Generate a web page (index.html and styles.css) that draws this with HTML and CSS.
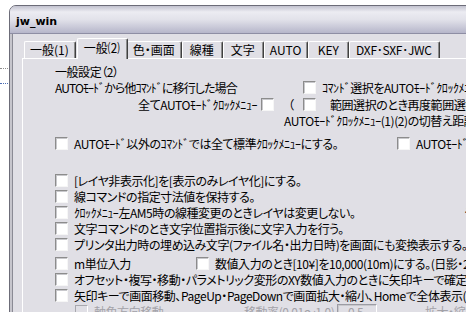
FILE: index.html
```html
<!DOCTYPE html>
<html lang="ja">
<head>
  <meta charset="UTF-8" />
  <title>jw_win</title>
  <link rel="stylesheet" href="styles.css">
</head>
<body>
  <div class="desk">
    <i class="dots"></i>
    <i class="dots blue"></i>
  </div>

  <div class="window">
    <div class="titlebar"><span class="title">jw_win</span></div>

    <div class="frame">
      <div class="tabs">
        <div class="tab">一般(1)</div>
        <div class="tab active">一般⑵</div>
        <div class="tab">色・画面</div>
        <div class="tab">線種</div>
        <div class="tab">文字</div>
        <div class="tab">AUTO</div>
        <div class="tab">KEY</div>
        <div class="tab wide">DXF･SXF･JWC</div>
      </div>

      <div class="panel">
        <div class="row heading">一般設定（2）</div>

        <div class="row">
          <span class="lead-r1">AUTOﾓｰﾄﾞから他ｺﾏﾝﾄﾞに移行した場合</span>
          <span class="opt"><i class="cb"></i>ｺﾏﾝﾄﾞ選択をAUTOﾓｰﾄﾞｸﾛｯｸﾒﾆｭｰにする</span>
        </div>

        <div class="row r2">
          <span class="lead-r2">全てAUTOﾓｰﾄﾞｸﾛｯｸﾒﾆｭｰ</span>
          <i class="cb"></i>
          <span class="paren">（</span>
          <span class="opt"><i class="cb"></i>範囲選択のとき再度範囲選択</span>
        </div>

        <div class="row r3">AUTOﾓｰﾄﾞｸﾛｯｸﾒﾆｭｰ(1)(2)の切替え距離</div>

        <div class="row r4">
          <span class="opt w-342"><i class="cb"></i>AUTOﾓｰﾄﾞ以外のｺﾏﾝﾄﾞでは全て標準ｸﾛｯｸﾒﾆｭｰにする。</span>
          <span class="opt"><i class="cb"></i>AUTOﾓｰﾄﾞｸﾛｯｸﾒﾆｭｰ</span>
        </div>

        <div class="group">
          <div class="row"><span class="opt"><i class="cb"></i>[レイヤ非表示化]を[表示のみレイヤ化]にする。</span></div>
          <div class="row"><span class="opt"><i class="cb"></i>線コマンドの指定寸法値を保持する。</span></div>
          <div class="row">
            <span class="opt w-410"><i class="cb"></i>ｸﾛｯｸﾒﾆｭｰ左AM5時の線種変更のときレイヤは変更しない。</span>
            <span>ｾ</span>
          </div>
          <div class="row"><span class="opt"><i class="cb"></i>文字コマンドのとき文字位置指示後に文字入力を行う。</span></div>
          <div class="row"><span class="opt"><i class="cb"></i>プリンタ出力時の埋め込み文字(ファイル名・出力日時)を画面にも変換表示する。</span></div>
        </div>

        <div class="group g2">
          <div class="row">
            <span class="opt w-141"><i class="cb"></i>m単位入力</span>
            <span class="opt"><i class="cb"></i>数値入力のとき[10¥]を10,000(10m)にする。(日影・2.5D)</span>
          </div>
          <div class="row"><span class="opt"><i class="cb"></i>オフセット・複写・移動・パラメトリック変形のXY数値入力のときに矢印キーで確定</span></div>
          <div class="row"><span class="opt"><i class="cb"></i>矢印キーで画面移動、PageUp・PageDownで画面拡大・縮小、Homeで全体表示(Ctrl)</span></div>
          <div class="row disabled">
            <span class="opt w-169"><i class="cb"></i>軸角方向移動</span>
            <span class="rate">移動率(0.01～1.0)</span>
            <span class="field">0.5</span>
            <span>拡大・縮小率</span>
          </div>
        </div>
      </div>
    </div>
  </div>
</body>
</html>
```

FILE: styles.css
```css
* {
  margin: 0;
  padding: 0;
  box-sizing: border-box;
}

body {
  display: flex;
  align-items: flex-start;
  width: 466px;
  height: 312px;
  overflow: hidden;
  background-color: #fff;
  font-family: "Noto Sans CJK JP", sans-serif;
  font-size: 12px;
  font-feature-settings: "palt";
  color: #000;
}

.desk {
  width: 9px;
  flex: none;
  padding-top: 68px;
}

.dots {
  display: block;
  width: 8px;
  margin-bottom: 14px;
  border-top: 1px dotted #8c8c8c;
}

.dots.blue {
  border-top-color: #4a6cb4;
}

.window {
  width: 540px;
  height: 330px;
  flex: none;
  margin-top: 5px;
  border: 1px solid #6c6c78;
  border-top-left-radius: 7px;
  overflow: hidden;
  background-color: #e0dfe5;
}

.titlebar {
  height: 28px;
  display: flex;
  align-items: center;
  padding: 3px 0 0 6px;
  background: linear-gradient(#c2c2cf 0, #ececf2 22%, #e2e2ea 50%, #b6b6ca 100%);
  border-bottom: 1px solid #8e8ea4;
}

.title {
  font-family: "DejaVu Sans", sans-serif;
  font-weight: bold;
  font-size: 11px;
}

.frame {
  height: 100%;
  padding-left: 10px;
  border-left: 2px solid #c6c5cc;
  box-shadow: inset 1px 0 #8a8a94;
}

.tabs {
  display: flex;
  align-items: flex-start;
  padding: 4px 0 0 2px;
  height: 24px;
}

.tab {
  min-width: 41px;
  height: 17px;
  margin-top: 3px;
  padding: 0 6px 0 5px;
  line-height: 16px;
  text-align: center;
  border-top: 1px solid #fff;
  border-left: 1px solid #fff;
  border-right: 1px solid #404040;
  box-shadow: inset -1px 0 #8c8c8c;
  border-radius: 2px 2px 0 0;
  white-space: nowrap;
}

.tab.active {
  position: relative;
  z-index: 1;
  height: 21px;
  margin: 0 -1px 0 1px;
  padding: 1px 7px 0 6px;
  background-color: #e0dfe5;
}

.tab.wide {
  width: 91px;
  padding: 0 2px 0 0;
  letter-spacing: -0.3px;
}

.panel {
  height: 260px;
  padding: 4px 0 0 32px;
  border-top: 1px solid #fff;
  border-left: 1px solid #fff;
  letter-spacing: -0.45px;
}

.row {
  display: flex;
  align-items: center;
  height: 16px;
  white-space: nowrap;
}

.opt {
  display: flex;
  align-items: center;
  flex: none;
}

.cb {
  width: 13px;
  height: 13px;
  flex: none;
  margin-right: 6px;
  background-color: #fff;
  border: 1px solid;
  border-color: #8c8c8c #f6f6f6 #f6f6f6 #8c8c8c;
  box-shadow: inset 1px 1px #c8c8cc;
}

.lead-r1 {
  width: 248px;
  flex: none;
  letter-spacing: -0.9px;
}

.r2 {
  margin-top: 1px;
}

.lead-r2 {
  width: 206px;
  flex: none;
  text-align: right;
  padding-right: 4px;
}

.r2 .cb:first-of-type {
  margin-right: 14px;
}

.paren {
  width: 15px;
  flex: none;
}

.r3 {
  padding-left: 229px;
}

.r4 {
  margin-top: 7px;
}

.w-342 { width: 342px; }
.w-410 { width: 410px; }
.w-141 { width: 141px; }
.w-169 { width: 169px; margin-left: 20px; }

.group {
  margin-top: 21px;
}

.g2 {
  margin-top: 3px;
}

.disabled {
  color: #a3a2a8;
}

.disabled .cb {
  background-color: #e0dfe5;
  border-color: #a8a8ae #fff #fff #a8a8ae;
  box-shadow: none;
}

.rate {
  width: 93px;
  flex: none;
}

.field {
  width: 40px;
  height: 18px;
  margin-right: 48px;
  padding-left: 10px;
  line-height: 14px;
  border: 1px solid;
  border-color: #9c9ca4 #fff #fff #9c9ca4;
  box-shadow: inset 1px 1px #c8c8cc;
  align-self: flex-start;
  margin-top: 1px;
}
```
